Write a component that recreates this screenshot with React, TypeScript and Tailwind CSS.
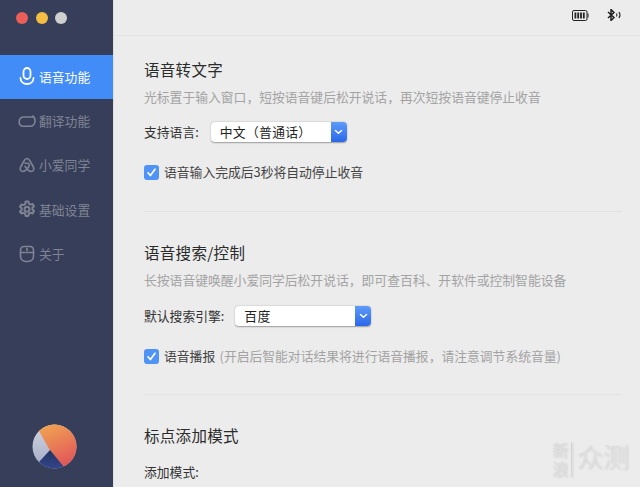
import React from 'react';

const font = { fontFamily: '"Noto Sans CJK SC", "Liberation Sans", sans-serif' };

const nav = [
  { label: '语音功能', icon: 'mic', active: true },
  { label: '翻译功能', icon: 'chat' },
  { label: '小爱同学', icon: 'ai' },
  { label: '基础设置', icon: 'gear' },
  { label: '关于', icon: 'mouse' },
];

const NavIcon: React.FC<{ name: string }> = ({ name }) => {
  const common = { width: 18, height: 18, viewBox: '0 0 18 18', fill: 'none', stroke: 'currentColor', strokeWidth: 1.6, strokeLinecap: 'round' as const, strokeLinejoin: 'round' as const };
  if (name === 'mic') {
    return (
      <svg {...common} strokeWidth={1.8}>
        <rect x="5.500" y="1" width="7" height="11" rx="3.500" />
        <path d="M2.500 11c0 3.600 2.800 6 6.500 6s6.500-2.400 6.500-6" />
      </svg>
    );
  }
  if (name === 'chat') {
    return (
      <svg {...common}>
        <path d="M4.500 14.300C2.300 13.800 1.200 12 1.200 10c0-2.800 1.800-5 4.800-5h8.500" />
        <path d="M14.500 4c1.700.8 2.500 2.400 2.500 4.700 0 3.100-1.900 5.500-5 5.500H5.500" />
      </svg>
    );
  }
  if (name === 'ai') {
    return (
      <svg {...common}>
        <path d="M9 2.500c1.400 0 2.200 1 3 2.500l3.400 6c1.200 2.200-.2 4.500-2.400 4.500-2.600 0-4.200-2.800-6-5.200" />
        <path d="M9 2.500c-1.400 0-2.200 1-3 2.500l-3.400 6c-1.200 2.200.2 4.500 2.400 4.500 2.600 0 4.200-2.800 6-5.200 1-1.300 0-3-1.800-3H7" />
      </svg>
    );
  }
  if (name === 'gear') {
    return (
      <svg {...common} strokeWidth={2}>
        <path d="M7.600 1.500h2.800l.5 2.200 1.600.9 2.100-.7 1.400 2.400-1.600 1.500v1.800l1.600 1.500-1.400 2.400-2.100-.7-1.600.9-.5 2.200H7.600l-.5-2.200-1.600-.9-2.100.7L2 11.600l1.600-1.500V8.300L2 6.800l1.400-2.400 2.100.7 1.600-.9z" />
        <circle cx="9" cy="9.200" r="2.500" />
      </svg>
    );
  }
  return (
    <svg {...common}>
      <path d="M2.500 5.500C2.500 3 4 1.500 6 1.500h6c2 0 3.500 1.500 3.500 4v6c0 3-2.700 5-6.500 5s-6.500-2-6.500-5z" />
      <path d="M2.500 7.500h13" />
      <path d="M9 3.500v2" />
    </svg>
  );
};

const Check = () => (
  <span className="flex h-[15px] w-[15px] shrink-0 items-center justify-center rounded-[3px] bg-[#4f93f6]">
    <svg width="11" height="11" viewBox="0 0 11 11" fill="none" stroke="#fff" strokeWidth="1.7" strokeLinecap="round" strokeLinejoin="round">
      <path d="M2 5.800l2.400 2.700L9 2.300" />
    </svg>
  </span>
);

const Select: React.FC<{ value: string }> = ({ value }) => (
  <div className="flex h-[20px] w-[136px] items-stretch rounded-[4px] bg-white shadow-[0_0.5px_1.5px_rgba(0,0,0,0.35)]">
    <span className="flex-1 pl-[9px] text-[12.800px] leading-[19px] tracking-[0.300px] text-[#222]">{value}</span>
    <span className="flex w-[16px] items-center justify-center rounded-r-[4px] bg-gradient-to-b from-[#5f9bf7] to-[#2a67ea]">
      <svg width="9" height="6" viewBox="0 0 9 6" fill="none" stroke="#fff" strokeWidth="1.500" strokeLinecap="round" strokeLinejoin="round">
        <path d="M1.500 1.500L4.500 4.300 7.500 1.500" />
      </svg>
    </span>
  </div>
);

export default function App() {
  return (
    <div className="flex h-[487px] w-[640px] overflow-hidden bg-[#ececec]" style={font}>
      {/* sidebar */}
      <aside className="flex w-[113px] shrink-0 flex-col bg-[#373e59]">
        <div className="flex h-[55px] gap-[7.500px] pl-[16px] pt-[12px]">
          <span className="h-[12px] w-[12px] rounded-full bg-[#ec5f59]" />
          <span className="h-[12px] w-[12px] rounded-full bg-[#f5bd41]" />
          <span className="h-[12px] w-[12px] rounded-full bg-[#cfcfcf]" />
        </div>
        <nav className="flex flex-col">
          {nav.map((n) => (
            <div
              key={n.label}
              className={`flex h-[44.300px] items-center gap-[3.500px] pb-[1.500px] pl-[17.500px] text-[12.800px] ${n.active ? 'bg-[#418cf7] text-white' : 'text-[#7f8494]'}`}
            >
              <NavIcon name={n.icon} />
              <span>{n.label}</span>
            </div>
          ))}
        </nav>
        <div className="mt-auto flex justify-center pb-[18px] pr-[4px]">
          <svg width="45" height="45" viewBox="0 0 45 45">
            <defs>
              <linearGradient id="orange" x1="0.300" y1="0" x2="0.700" y2="1">
                <stop offset="0" stopColor="#f0a152" />
                <stop offset="1" stopColor="#e0505a" />
              </linearGradient>
              <linearGradient id="silver" x1="0" y1="0" x2="0" y2="1">
                <stop offset="0" stopColor="#d3d6e0" />
                <stop offset="1" stopColor="#a2abc6" />
              </linearGradient>
              <linearGradient id="navy" x1="0" y1="0" x2="0" y2="1">
                <stop offset="0" stopColor="#203562" />
                <stop offset="1" stopColor="#3a4a95" />
              </linearGradient>
              <clipPath id="disc">
                <circle cx="22.500" cy="22.500" r="22" />
              </clipPath>
            </defs>
            <g clipPath="url(#disc)">
              <rect width="45" height="45" fill="url(#silver)" />
              <path d="M7 7L18 26.500 31 45H45V0H7z" fill="url(#orange)" />
              <path d="M18 26L32 43 20 50 7 38z" fill="url(#navy)" />
            </g>
          </svg>
        </div>
      </aside>

      {/* main */}
      <main className="flex min-w-0 flex-1 flex-col border-l border-[#dedede]">
        <header className="flex h-[36px] shrink-0 items-center justify-end gap-[18px] border-b border-[#e3e3e3] pb-[5px] pr-[18px]">
          <svg width="17" height="11" viewBox="0 0 17 11">
            <rect x="0.500" y="0.500" width="14.500" height="10" rx="1.500" fill="none" stroke="#222" />
            <path d="M2.500 2.500h1.800v6H2.500zM5.300 2.500h1.800v6H5.300zM8.100 2.500h1.800v6H8.100zM10.900 2.500h1.800v6h-1.800z" fill="#222" />
            <path d="M16 3.500v4" stroke="#222" />
          </svg>
          <svg width="15" height="12" viewBox="0 0 15 12" fill="none" stroke="#222">
            <path d="M1 3l6 5.500-3 3V.5l3 3L1 9" strokeWidth="1.500" />
            <path d="M9.500 4.500c.6 1 .6 2 0 3M12 3c1.200 1.800 1.200 4.200 0 6" strokeWidth="1.100" />
          </svg>
        </header>

        <div className="flex flex-col pl-[30px] pr-[18px]">
          <section className="h-[176px] border-b border-[#e2e2e2] pt-[22px]">
            <h2 className="text-[15.500px] leading-[22px] tracking-[0.300px] text-[#2b2b2b]">语音转文字</h2>
            <p className="mt-[8px] text-[12.800px] leading-[18px] text-[#a3a3a3]">光标置于输入窗口，短按语音键后松开说话，再次短按语音键停止收音</p>
            <div className="mt-[16px] flex items-center gap-[12px] text-[12.800px] text-[#333]">
              <span>支持语言:</span>
              <Select value="中文（普通话）" />
            </div>
            <label className="mt-[21px] flex items-center gap-[5px] text-[12.800px] leading-[18px] text-[#444]">
              <Check />
              <span>语音输入完成后3秒将自动停止收音</span>
            </label>
          </section>

          <section className="h-[183px] border-b border-[#e2e2e2] pt-[29px]">
            <h2 className="text-[15.500px] leading-[22px] tracking-[0.300px] text-[#2b2b2b]">语音搜索/控制</h2>
            <p className="mt-[8px] text-[12.800px] leading-[18px] text-[#a3a3a3]">长按语音键唤醒小爱同学后松开说话，即可查百科、开软件或控制智能设备</p>
            <div className="mt-[17px] flex items-center gap-[11px] text-[12.800px] text-[#333]">
              <span>默认搜索引擎:</span>
              <Select value="百度" />
            </div>
            <label className="mt-[21px] flex items-center gap-[5px] text-[12.800px] leading-[18px] text-[#444]">
              <Check />
              <span className="whitespace-nowrap">
                语音播报 <span className="ml-[1.500px] text-[#a3a3a3]">(开启后智能对话结果将进行语音播报，请注意调节系统音量)</span>
              </span>
            </label>
          </section>

          <section className="relative pt-[29px]">
            <h2 className="text-[15.500px] leading-[22px] tracking-[0.300px] text-[#2b2b2b]">标点添加模式</h2>
            <p className="mt-[17px] text-[12.800px] leading-[18px] text-[#333]">添加模式:</p>
            {/* watermark */}
            <div className="absolute left-[408px] top-[47px] flex items-start whitespace-nowrap text-[#dedede] drop-shadow-[1px_1px_1px_rgba(0,0,0,0.15)]">
              <span className="text-[16px] leading-[16px] tracking-[3px] [writing-mode:vertical-rl]">新浪</span>
              <span className="ml-[3px] h-[35px] w-px bg-[#d4d4d4]" />
              <span className="ml-[5px] text-[26px] font-light leading-[28px]">众测</span>
            </div>
          </section>
        </div>
      </main>
    </div>
  );
}
